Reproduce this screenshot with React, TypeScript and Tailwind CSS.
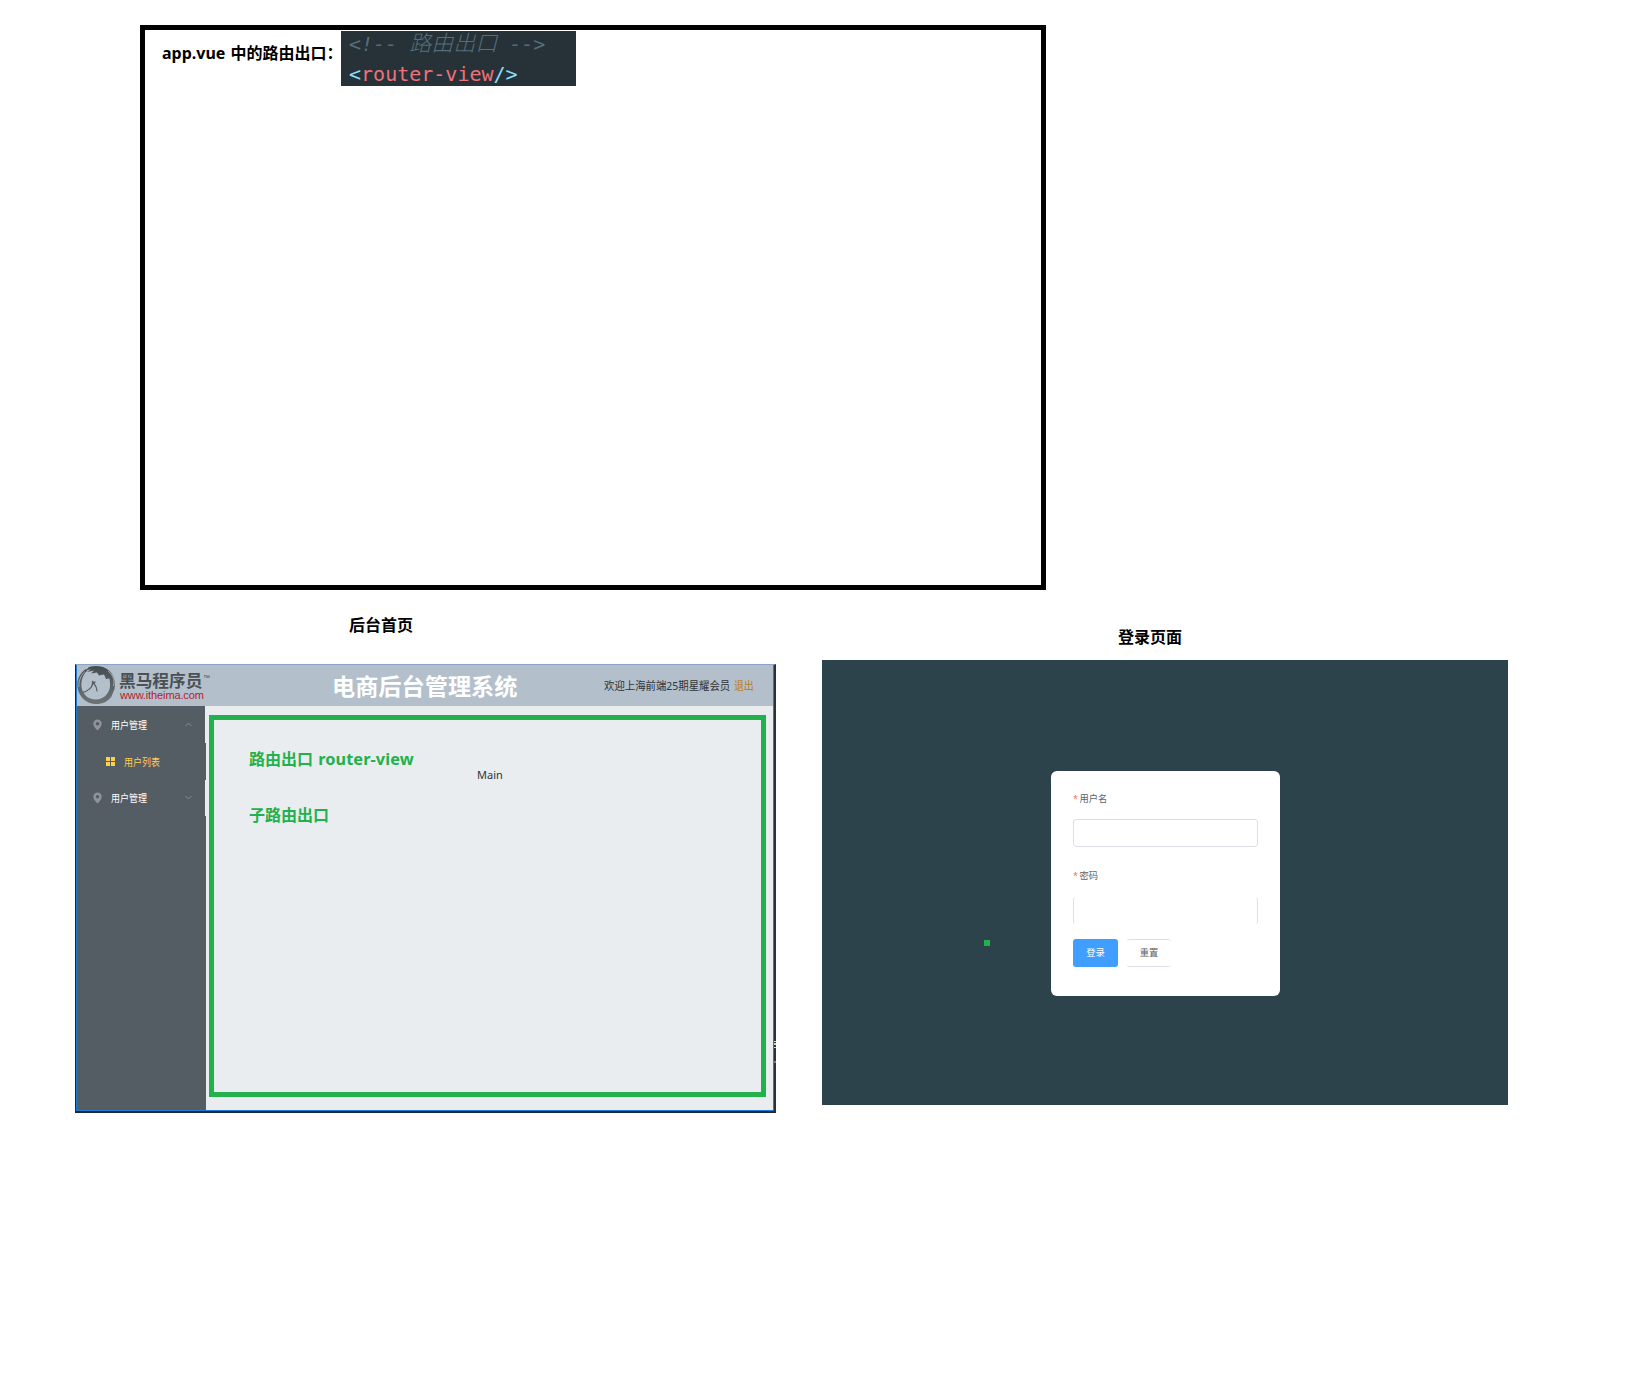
import React from 'react';

function Logo() {
  return (
    <div className="flex w-[136px] shrink-0">
      <svg className="block h-[40px] w-[39px] shrink-0" viewBox="0 0 39 40">
        <defs>
          <linearGradient id="ring" x1="0" y1="0" x2="0" y2="1">
            <stop offset="0" stopColor="#464d50" />
            <stop offset="0.55" stopColor="#5c6366" />
            <stop offset="1" stopColor="#6d7478" />
          </linearGradient>
        </defs>
        <path
          fill="url(#ring)"
          d="M9 4C3 8 0 14 .3 21C1.300 31.500 9 39 19 39C26 39 31 36.500 34.500 31.500L37.500 24C39 17 37 10 32 5.500C27 1 19 0 12 2L8 6L14 4L10 7L17 5.500L14 8.500L20 7.500L22 10.500L27 9.500L29 14L32.500 13.500L33 18C34 26 28.500 34 19.500 34.500C11.500 35 5.500 29.500 4.500 22C4 16 5.500 10 10 6Z"
        />
        <path fill="none" stroke="#555c5f" strokeWidth="1.2" strokeLinecap="round" d="M6 27C8.500 28 10 25 12.500 24C15 22 16 20 15.500 16C17 19 20 21 20 26M16 19L18 17" />
        <path fill="none" stroke="#c3ced7" strokeWidth="0.7" d="M1.800 22C1.800 15 4 10 8 6.500M31 6C36 10 38 15 36.500 21" />
      </svg>
      <div className="ml-[3px] w-[83px] pt-[5px] whitespace-nowrap">
        <div className="text-[16.7px] leading-[22px] font-bold text-[#4a5053]">黑马程序员</div>
        <div className="-mt-[3px] ml-px font-['Liberation_Sans',sans-serif] text-[11px] leading-[13px] tracking-[-0.12px] text-[#b3202a]">www.itheima.com</div>
      </div>
      <div className="mt-[9px] ml-px font-['Liberation_Sans',sans-serif] text-[7px] leading-[8px] text-[#4a5053]">™</div>
    </div>
  );
}

function Pin() {
  return (
    <svg className="block h-[12px] w-[9px]" viewBox="0 0 9 12">
      <path fill="#909399" fillRule="evenodd" d="M4.500 .5A4.200 4.200 0 0 0 .3 4.700C.3 7 2.500 9.500 4.500 11.500C6.500 9.500 8.700 7 8.700 4.700A4.200 4.200 0 0 0 4.500 .5ZM4.500 3A1.800 1.800 0 1 1 4.500 6.600A1.800 1.800 0 0 1 4.500 3Z" />
    </svg>
  );
}

function Chevron({ up = false }: { up?: boolean }) {
  return (
    <svg className="block h-[5px] w-[7px]" viewBox="0 0 7 5">
      <path fill="none" stroke="#8b9095" strokeWidth="0.9" d={up ? 'M.5 4L3.500 1L6.500 4' : 'M.5 1L3.500 4L6.500 1'} />
    </svg>
  );
}

function MenuGroup({ label, up }: { label: string; up?: boolean }) {
  return (
    <div className="flex h-[36px] items-center border-r border-[#e9edf0] pl-[16px]">
      <Pin />
      <span className="ml-[9px] w-[74px]">
        <span className="block w-max origin-left scale-x-[.84] text-[10.7px] leading-[16px] text-white">{label}</span>
      </span>
      <span className="-mt-[2px]">
        <Chevron up={up} />
      </span>
    </div>
  );
}

function AdminPage() {
  return (
    <div className="relative h-[449px] w-[701px] border-t border-r-2 border-b-2 border-l border-t-[#8aa6c2] border-r-[#27323a] border-b-[#1b2733] border-l-[#1b2733]">
      <div className="flex h-full flex-col border-r border-b border-l border-[#1c7bd4]">
        <header className="flex h-[41px] shrink-0 bg-[#b3c0cc]">
          <Logo />
          <h1 className="ml-[119px] w-[186px] text-[23.2px] leading-[42px] font-bold whitespace-nowrap text-white">电商后台管理系统</h1>
          <p className="ml-[86px] w-max origin-left scale-x-[.92] text-[11.3px] leading-[42px] whitespace-nowrap text-[#303336]">
            欢迎上海前端25期星耀会员<span className="ml-[4px] text-[10.8px] text-[#b87d1c]">退出</span>
          </p>
        </header>
        <div className="flex flex-1">
          <aside className="w-[129px] shrink-0 bg-[#545c64]">
            <div className="h-px border-r border-[#e9edf0]" />
            <MenuGroup label="用户管理" up />
            <div className="flex h-[37px] items-center pl-[29px] text-[#ffd04b]">
              <svg className="block size-[9px]" viewBox="0 0 9 9" fill="currentColor">
                <path d="M0 0h4v4H0zM5 0h4v4H5zM0 5h4v4H0zM5 5h4v4H5z" />
              </svg>
              <span className="ml-[9px] block w-max origin-left scale-x-[.84] text-[10.7px] leading-[16px]">用户列表</span>
            </div>
            <MenuGroup label="用户管理" />
          </aside>
          <main className="flex-1 bg-[#e9edf0] pt-[9px] pl-[3px]">
            <div className="flex h-[382px] w-[557px] border-[5px] border-[#22b14c] pl-[35px]">
              <div className="w-[228px] pt-[28px] text-[16px] leading-[22px] font-bold text-[#22b14c]">
                <p>
                  路由出口 <span className="ml-px text-[16.3px] tracking-[0.1px]">router-view</span>
                </p>
                <p className="mt-[34px]">子路由出口</p>
              </div>
              <p className="pt-[46px] text-[11px] leading-[18px] text-[#303336]">Main</p>
            </div>
          </main>
        </div>
      </div>
      <div className="absolute top-[376px] -right-[2px] h-[7px] w-[2px] border-y border-[#c3e88d] py-px">
        <div className="h-[2px] bg-[#c3e88d]" />
      </div>
      <div className="absolute top-[396px] -right-[2px] h-[2px] w-[2px] bg-[#8d6fb0]" />
    </div>
  );
}

function FieldLabel({ label }: { label: string }) {
  return (
    <div className="flex h-[16px] items-center text-[9.3px] leading-[16px] text-[#606266]">
      <span className="mr-[2.5px] w-[4px] text-[#f56c6c]">*</span>
      <span>{label}</span>
    </div>
  );
}

function LoginPage() {
  return (
    <div className="h-[445px] w-[686px] bg-[#2d434c] pt-[111px] pl-[229px]">
      <div className="relative h-[225px] w-[229px] rounded-[6px] bg-white px-[22px] pt-[20px]">
        <FieldLabel label="用户名" />
        <div className="mt-[12px] h-[28px] rounded-[3px] border border-[#dcdfe6]" />
        <div className="mt-[21px]">
          <FieldLabel label="密码" />
        </div>
        <div className="mt-[13px] h-[27px] rounded-[3px] border-x border-[#dcdfe6]" />
        <div className="mt-[15px] flex gap-[9px] text-[9.3px]">
          <button className="h-[28px] w-[45px] rounded-[3px] bg-[#409eff] leading-[28px] text-white">登录</button>
          <button className="h-[28px] w-[44px] rounded-[3px] border-y border-[#dcdfe6] leading-[26px] text-[#606266]">重置</button>
        </div>
        <div className="absolute top-[169px] -left-[67px] size-[6px] bg-[#22b14c]" />
      </div>
    </div>
  );
}

export default function App() {
  return (
    <div className="h-[1384px] w-[1630px] overflow-hidden bg-white pt-[25px] font-['Noto_Sans','Noto_Sans_CJK_SC',sans-serif] text-black">
      <section className="ml-[140px] flex h-[565px] w-[906px] border-[5px] border-black pt-px pl-[17px]">
        <h2 className="w-[179px] pt-[11px] text-[16px] leading-[22px] font-bold whitespace-nowrap [word-spacing:1px]">app.vue 中的路由出口：</h2>
        <div className="h-[55px] w-[235px] bg-[#263238] pl-[8px] font-['DejaVu_Sans_Mono','Noto_Sans_CJK_SC',monospace] text-[20px] whitespace-pre">
          <div className="h-[28px] leading-[26px] text-[#546e7a] italic">
            {'<!-- '}
            <span className="text-[22px] leading-[20px] font-light">路由出口</span>
            {' -->'}
          </div>
          <div className="h-[27px] leading-[31px] text-[#89ddff]">
            {'<'}
            <span className="text-[#f07178]">router-view</span>
            {'/>'}
          </div>
        </div>
      </section>
      <div className="flex">
        <section className="ml-[75px] w-[701px]">
          <h2 className="h-[74px] pt-[24px] pl-[274px] text-[16px] leading-[22px] font-bold">后台首页</h2>
          <AdminPage />
        </section>
        <section className="ml-[46px] w-[686px]">
          <h2 className="h-[70px] pt-[36px] pl-[296px] text-[16px] leading-[22px] font-bold">登录页面</h2>
          <LoginPage />
        </section>
      </div>
    </div>
  );
}
